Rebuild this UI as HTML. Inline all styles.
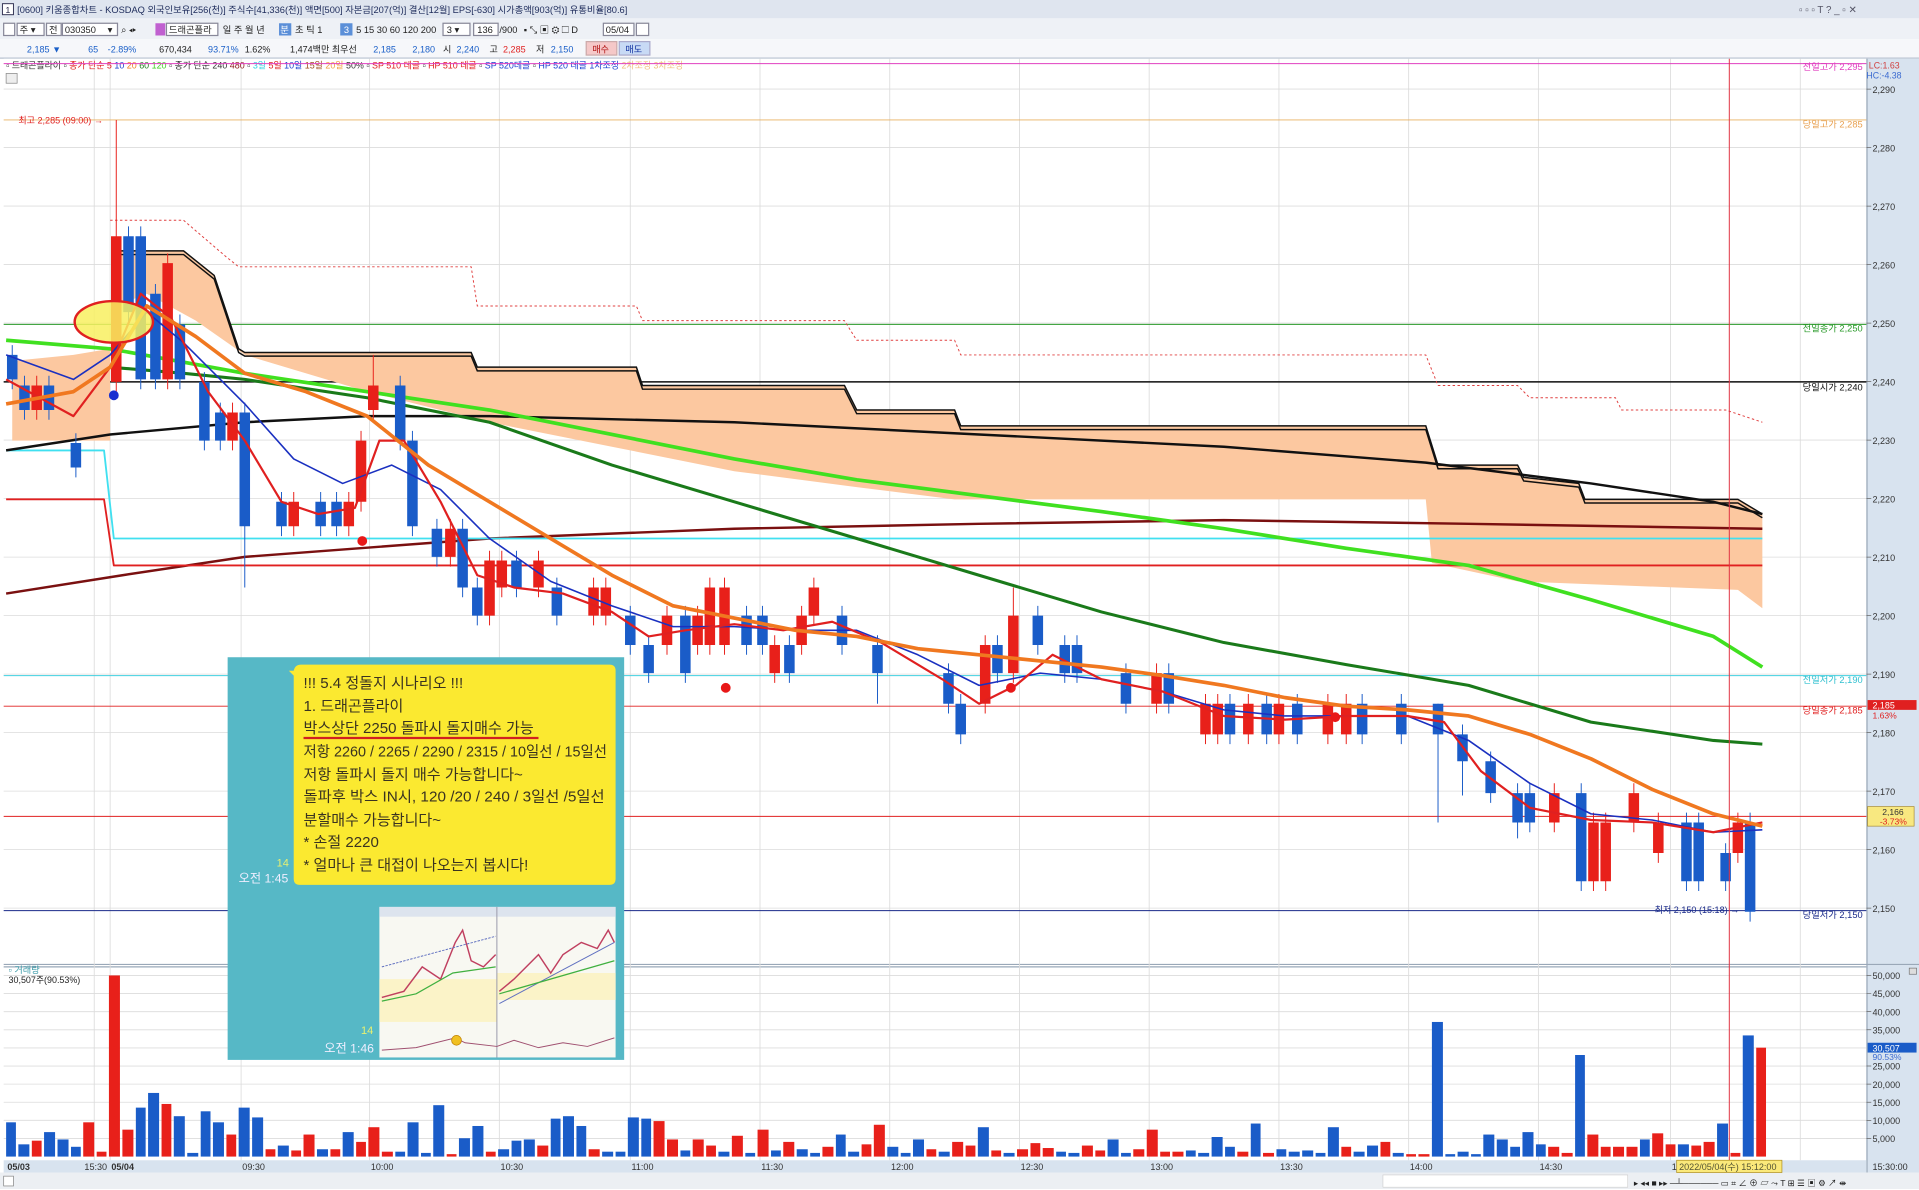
<!DOCTYPE html>
<html><head><meta charset="utf-8"><style>
html,body{margin:0;padding:0;background:#fff;overflow:hidden;width:1919px;height:1189px}
#w{position:absolute;left:0;top:0;width:1568px;height:971.5px;transform:scale(1.22385,1.2239);transform-origin:0 0}
svg{position:absolute;left:0;top:0;display:block}
text{font-family:"Liberation Sans","Noto Sans CJK KR",sans-serif}
#vol{position:absolute;left:4.7px;top:797px;height:148px;width:1480px;display:flex;align-items:flex-end;gap:2px}
#vol i{display:block;width:8.6px;flex:none}
#vol i.b{background:#1a5cc8}#vol i.r{background:#e8201a}
</style></head><body><div id="w">
<svg width="1568" height="972" xmlns="http://www.w3.org/2000/svg">
<rect x="0" y="0" width="1568" height="15" fill="#dfe5ef"/>
<rect x="2" y="3" width="9" height="9" fill="#fff" stroke="#335" stroke-width="0.8"/>
<text x="4.5" y="10.5" font-size="7" fill="#224">1</text>
<text x="14" y="10.5" font-size="7.6" fill="#1c2a5a">[0600] 키움종합차트 - KOSDAQ 외국인보유[256(천)] 주식수[41,336(천)] 액면[500] 자본금[207(억)] 결산[12월] EPS[-630] 시가총액[903(억)] 유통비율[80.6]</text>
<text x="1470" y="10.5" font-size="8" fill="#556">▫ ▫ ▫ T ? _ ▫ ✕</text>
<rect x="0" y="15" width="1568" height="17" fill="#eef1f6"/>
<rect x="0" y="32" width="1568" height="15" fill="#f6f7fa"/>
<line x1="0" y1="47.5" x2="1568" y2="47.5" stroke="#b8c2d0"/>
<g font-size="7.6" fill="#222">
<rect x="3" y="19" width="9" height="10" fill="#fff" stroke="#889"/><rect x="14" y="19" width="22" height="10" fill="#fff" stroke="#889"/><text x="16" y="27">주 ▾</text>
<rect x="38" y="19" width="12" height="10" fill="#fff" stroke="#889"/><text x="40" y="27">전</text>
<rect x="51" y="19" width="45" height="10" fill="#fff" stroke="#889"/><text x="53" y="27">030350</text><text x="88" y="27">▾</text>
<text x="99" y="27">⌕ ◂▸</text>
<rect x="127" y="19" width="8" height="10" fill="#c060d0"/>
<rect x="136" y="19" width="42" height="10" fill="#fff" stroke="#889"/><text x="138" y="27">드래곤플라</text>
<text x="182" y="27">일 주 월 년</text>
<rect x="228" y="19" width="10" height="10" fill="#5b8fd8"/><text x="229" y="27" fill="#fff">분</text>
<text x="241" y="27">초 틱 1</text>
<rect x="278" y="19" width="10" height="10" fill="#5b8fd8"/><text x="281" y="27" fill="#fff">3</text>
<text x="291" y="27">5 15 30 60 120 200</text>
<rect x="362" y="19" width="22" height="10" fill="#fff" stroke="#889"/><text x="365" y="27">3 ▾</text>
<rect x="387" y="19" width="20" height="10" fill="#fff" stroke="#889"/><text x="390" y="27">136</text><text x="408" y="27">/900</text>
<text x="428" y="27">▪ ⤡ ▣ ⚙ ☐ D</text>
<rect x="493" y="19" width="25" height="10" fill="#fff" stroke="#889"/><text x="495" y="27">05/04</text>
<rect x="520" y="19" width="10" height="10" fill="#fff" stroke="#889"/>
<g font-size="7.4">
<text x="22" y="43" fill="#1a5fc8">2,185 ▼</text><text x="72" y="43" fill="#1a5fc8">65</text><text x="88" y="43" fill="#1a5fc8">-2.89%</text>
<text x="130" y="43">670,434</text><text x="170" y="43" fill="#1a5fc8">93.71%</text><text x="200" y="43">1.62%</text>
<text x="237" y="43">1,474백만 최우선</text><text x="305" y="43" fill="#1a5fc8">2,185</text><text x="337" y="43" fill="#1a5fc8">2,180</text>
<text x="362" y="43">시</text><text x="373" y="43" fill="#1a5fc8">2,240</text><text x="400" y="43">고</text><text x="411" y="43" fill="#e02020">2,285</text><text x="438" y="43">저</text><text x="450" y="43" fill="#1a5fc8">2,150</text>
<rect x="479" y="34" width="25" height="11" fill="#f5c8c8" stroke="#caa"/><text x="484" y="43" fill="#b01010">매수</text>
<rect x="506" y="34" width="25" height="11" fill="#c8daf5" stroke="#aac"/><text x="511" y="43" fill="#1030a0">매도</text>
</g></g>
<rect x="3" y="48" width="1522" height="740" fill="#fff"/>
<rect x="1525" y="48" width="43" height="910" fill="#d8e3ef"/>
<line x1="1525.5" y1="48" x2="1525.5" y2="958" stroke="#9aa8b8"/>
<line x1="3" y1="788" x2="1568" y2="788" stroke="#9aa8b8"/>
<line x1="3" y1="790" x2="1525" y2="790" stroke="#9aa8b8"/>
<rect x="5" y="60" width="9" height="8" fill="#eee" stroke="#888" stroke-width="0.6"/>
<path d="M3 72.8H1525M3 120.6H1525M3 168.4H1525M3 216.2H1525M3 264H1525M3 311.8H1525M3 359.6H1525M3 407.4H1525M3 455.2H1525M3 503H1525M3 550.8H1525M3 598.6H1525M3 646.4H1525M3 694.2H1525M3 742H1525M3 797H1525M3 811.8H1525M3 826.6H1525M3 841.4H1525M3 856.2H1525M3 871H1525M3 885.8H1525M3 900.6H1525M3 915.4H1525M3 930.2H1525M77 48V948M90 48V948M197 48V948M302 48V948M408 48V948M515 48V948M621 48V948M727 48V948M833 48V948M939 48V948M1045 48V948M1151 48V948M1257 48V948M1365 48V948M1471 48V948" stroke="#dcdcdc" stroke-width="0.7" fill="none"/>
<path d="M1525 72.8h4M1525 120.6h4M1525 168.4h4M1525 216.2h4M1525 264h4M1525 311.8h4M1525 359.6h4M1525 407.4h4M1525 455.2h4M1525 503h4M1525 550.8h4M1525 598.6h4M1525 646.4h4M1525 694.2h4M1525 742h4M1525 797h4M1525 811.8h4M1525 826.6h4M1525 841.4h4M1525 871h4M1525 885.8h4M1525 900.6h4M1525 915.4h4M1525 930.2h4" stroke="#666" stroke-width="0.6"/>
<g font-size="7.4" fill="#333">
<text x="1530" y="75.8">2,290</text><text x="1530" y="123.6">2,280</text><text x="1530" y="171.4">2,270</text><text x="1530" y="219.2">2,260</text><text x="1530" y="267">2,250</text><text x="1530" y="314.8">2,240</text><text x="1530" y="362.6">2,230</text><text x="1530" y="410.4">2,220</text><text x="1530" y="458.2">2,210</text><text x="1530" y="506">2,200</text><text x="1530" y="553.8">2,190</text><text x="1530" y="601.6">2,180</text><text x="1530" y="649.4">2,170</text><text x="1530" y="697.2">2,160</text><text x="1530" y="745">2,150</text>
<text x="1530" y="800">50,000</text><text x="1530" y="814.8">45,000</text><text x="1530" y="829.6">40,000</text><text x="1530" y="844.4">35,000</text><text x="1530" y="874">25,000</text><text x="1530" y="888.8">20,000</text><text x="1530" y="903.6">15,000</text><text x="1530" y="918.4">10,000</text><text x="1530" y="933.2">5,000</text>
</g>
<text x="5" y="56" font-size="7.3" fill="#333">▫ 드래곤플라이 ▫ <tspan fill="#e02020">종가 단순 5</tspan> <tspan fill="#1a40d0">10</tspan> <tspan fill="#f08020">20</tspan> <tspan fill="#208020">60</tspan> <tspan fill="#40d020">120</tspan> ▫ 종가 단순 240 <tspan fill="#8a1a1a">480</tspan> ▫ <tspan fill="#30d0e0">3일</tspan> <tspan fill="#e02020">5일</tspan> <tspan fill="#1a40d0">10일</tspan> <tspan fill="#a05020">15일</tspan> <tspan fill="#f0a040">20일</tspan> 50% ▫ <tspan fill="#e02020">SP 510 데골</tspan> ▫ <tspan fill="#e02020">HP 510 데골</tspan> ▫ <tspan fill="#1a40d0">SP 520데골</tspan> ▫ <tspan fill="#1a40d0">HP 520 데골</tspan> <tspan fill="#1a40d0">1차조정</tspan> <tspan fill="#f0c080">2차조정 3차조정</tspan></text>
<line x1="3" x2="1525" y1="52" y2="52" stroke="#e040c0" stroke-width="0.8"/>
<line x1="3" x2="1525" y1="98" y2="98" stroke="#e8b060" stroke-width="0.8"/>
<line x1="3" x2="1525" y1="265" y2="265" stroke="#2a9a2a" stroke-width="0.8"/>
<line x1="3" x2="1525" y1="312" y2="312" stroke="#111" stroke-width="1.2"/>
<line x1="3" x2="1525" y1="552" y2="552" stroke="#40d0e0" stroke-width="0.8"/>
<line x1="3" x2="1525" y1="577" y2="577" stroke="#e02020" stroke-width="0.8"/>
<line x1="3" x2="1525" y1="667" y2="667" stroke="#e02020" stroke-width="0.8"/>
<line x1="3" x2="1525" y1="744" y2="744" stroke="#1a2a8a" stroke-width="0.8"/>
<g font-size="7.6" text-anchor="end">
<text x="1522" y="57" fill="#e040c0">전일고가 2,295</text>
<text x="1522" y="104" fill="#e8a050">당일고가 2,285</text>
<text x="1522" y="271" fill="#2a9a2a">전일종가 2,250</text>
<text x="1522" y="319" fill="#111">당일시가 2,240</text>
<text x="1522" y="558" fill="#30c0d0">전일저가 2,190</text>
<text x="1522" y="583" fill="#e02020">당일종가 2,185</text>
<text x="1522" y="750" fill="#1a2a8a">당일저가 2,150</text>
</g>
<text x="1527" y="56" font-size="7.2" fill="#d04040">LC:1.63</text>
<text x="1525" y="64" font-size="7.2" fill="#3a6ad0">HC:-4.38</text>
<path d="M10 295 L60 290 L90 285 L90 360 L10 360Z" fill="#fcc8a0"/>
<path d="M95 205 L150 205 L175 225 L195 285 L200 288 L385 288 L390 300 L520 300 L525 315 L690 315 L700 335 L780 335 L785 348 L1165 348 L1175 380 L1240 380 L1245 390 L1290 395 L1295 408 L1420 408 L1440 420 L1440 497 L1420 482 L1240 475 L1170 460 L1165 408 L780 408 L700 398 L600 385 L500 365 L400 345 L300 320 L200 290 L160 262 L120 240 L95 250Z" fill="#fcc8a0"/>
<path d="M95 205 L150 205 L175 225 L195 285 L200 288 L385 288 L390 300 L520 300 L525 315 L690 315 L700 335 L780 335 L785 348 L1165 348 L1175 380 L1240 380 L1245 390 L1290 395 L1295 408 L1420 408 L1440 420" fill="none" stroke="#111" stroke-width="1.2"/>
<path d="M95 208 L150 208 L175 228 L195 288 L200 291 L385 291 L390 303 L520 303 L525 318 L690 318 L700 338 L780 338 L785 351 L1165 351 L1175 383 L1240 383 L1245 393 L1290 398 L1295 411 L1420 411 L1440 423" fill="none" stroke="#111" stroke-width="1.2"/>
<path d="M90 180 L150 180 L185 210 L195 218 L385 218 L390 250 L520 250 L525 262 L690 262 L700 278 L780 278 L785 290 L1165 290 L1175 315 L1240 315 L1250 325 L1320 325 L1325 335 L1410 335 L1440 345" fill="none" stroke="#e04040" stroke-width="0.8" stroke-dasharray="2 2"/>
<g fill="none" stroke-linejoin="round">
<path d="M5 485 L100 470 L200 455 L400 440 L600 432 L800 428 L1000 425 L1200 428 L1440 432" stroke="#7a1010" stroke-width="2"/>
<path d="M5 368 L85 368 L93 440 L1440 440" stroke="#40e0f0" stroke-width="1.5"/>
<path d="M5 408 L85 408 L93 462 L1440 462" stroke="#e02020" stroke-width="1.5"/>
<path d="M5 368 L90 355 L200 345 L300 340 L400 340 L600 345 L800 355 L1000 365 L1165 378 L1300 395 L1400 410 L1440 420" stroke="#111" stroke-width="2"/>
<path d="M5 278 L90 285 L200 305 L300 320 L400 335 L500 355 L600 375 L700 392 L800 405 L900 418 L1000 432 L1100 448 L1200 462 L1300 490 L1400 520 L1440 545" stroke="#40e020" stroke-width="3"/>
<path d="M90 300 L150 305 L200 310 L300 325 L400 345 L500 380 L600 410 L700 440 L800 470 L900 500 L1000 525 L1100 543 L1200 560 L1300 590 L1400 605 L1440 608" stroke="#1a7a1a" stroke-width="2.5"/>
</g>
<path stroke="#1a5cc8" stroke-width="0.8" d="M10 282V318M20 307V343M40 307V343M62 354V390M105 185V263M115 185V318M127 232V318M147 257V318M167 304V368M180 329V368M200 329V480M230 402V438M262 402V438M275 402V438M327 307V368M337 352V438M357 424V463M378 424V488M390 472V511M422 450V488M455 472V511M515 495V535M530 519V558M560 495V558M610 495V535M623 495V535M645 519V558M688 495V535M717 519V575M775 542V583M785 567V608M815 519V558M848 495V535M870 519V558M880 519V558M920 542V583M955 542V583M1005 567V608M1035 567V608M1060 567V608M1113 567V608M1145 567V608M1175 575V672M1195 592V650M1218 614V656M1240 640V685M1250 640V680M1292 640V728M1378 664V728M1388 664V728M1410 689V728M1430 664V753"/>
<path stroke="#e8201a" stroke-width="0.8" d="M30 307V343M95 98V320M137 207V318M190 329V368M240 402V438M285 402V438M295 352V418M305 290V345M368 424V463M400 450V511M410 450V488M440 450V488M485 472V511M495 472V511M545 495V535M570 495V535M580 472V535M592 472V535M633 519V558M655 495V535M665 472V511M805 519V583M828 480V558M945 542V583M985 567V608M995 567V608M1020 567V608M1045 567V608M1085 567V608M1100 567V608M1270 640V680M1302 664V728M1312 664V728M1335 640V680M1355 664V705M1420 664V705"/>
<path fill="#1a5cc8" d="M5.7 290h8.6v20h-8.6zM15.7 315h8.6v20h-8.6zM35.7 315h8.6v20h-8.6zM57.7 362h8.6v20h-8.6zM100.7 193h8.6v62h-8.6zM110.7 193h8.6v117h-8.6zM122.7 240h8.6v70h-8.6zM142.7 265h8.6v45h-8.6zM162.7 312h8.6v48h-8.6zM175.7 337h8.6v23h-8.6zM195.7 337h8.6v93h-8.6zM225.7 410h8.6v20h-8.6zM257.7 410h8.6v20h-8.6zM270.7 410h8.6v20h-8.6zM322.7 315h8.6v45h-8.6zM332.7 360h8.6v70h-8.6zM352.7 432h8.6v23h-8.6zM373.7 432h8.6v48h-8.6zM385.7 480h8.6v23h-8.6zM417.7 458h8.6v22h-8.6zM450.7 480h8.6v23h-8.6zM510.7 503h8.6v24h-8.6zM525.7 527h8.6v23h-8.6zM555.7 503h8.6v47h-8.6zM605.7 503h8.6v24h-8.6zM618.7 503h8.6v24h-8.6zM640.7 527h8.6v23h-8.6zM683.7 503h8.6v24h-8.6zM712.7 527h8.6v23h-8.6zM770.7 550h8.6v25h-8.6zM780.7 575h8.6v25h-8.6zM810.7 527h8.6v23h-8.6zM843.7 503h8.6v24h-8.6zM865.7 527h8.6v23h-8.6zM875.7 527h8.6v23h-8.6zM915.7 550h8.6v25h-8.6zM950.7 550h8.6v25h-8.6zM1000.7 575h8.6v25h-8.6zM1030.7 575h8.6v25h-8.6zM1055.7 575h8.6v25h-8.6zM1108.7 575h8.6v25h-8.6zM1140.7 575h8.6v25h-8.6zM1170.7 575h8.6v25h-8.6zM1190.7 600h8.6v22h-8.6zM1213.7 622h8.6v26h-8.6zM1235.7 648h8.6v24h-8.6zM1245.7 648h8.6v24h-8.6zM1287.7 648h8.6v72h-8.6zM1373.7 672h8.6v48h-8.6zM1383.7 672h8.6v48h-8.6zM1405.7 697h8.6v23h-8.6zM1425.7 672h8.6v73h-8.6z"/>
<path fill="#e8201a" d="M25.7 315h8.6v20h-8.6zM90.7 193h8.6v119h-8.6zM132.7 215h8.6v95h-8.6zM185.7 337h8.6v23h-8.6zM235.7 410h8.6v20h-8.6zM280.7 410h8.6v20h-8.6zM290.7 360h8.6v50h-8.6zM300.7 315h8.6v20h-8.6zM363.7 432h8.6v23h-8.6zM395.7 458h8.6v45h-8.6zM405.7 458h8.6v22h-8.6zM435.7 458h8.6v22h-8.6zM480.7 480h8.6v23h-8.6zM490.7 480h8.6v23h-8.6zM540.7 503h8.6v24h-8.6zM565.7 503h8.6v24h-8.6zM575.7 480h8.6v47h-8.6zM587.7 480h8.6v47h-8.6zM628.7 527h8.6v23h-8.6zM650.7 503h8.6v24h-8.6zM660.7 480h8.6v23h-8.6zM800.7 527h8.6v48h-8.6zM823.7 503h8.6v47h-8.6zM940.7 550h8.6v25h-8.6zM980.7 575h8.6v25h-8.6zM990.7 575h8.6v25h-8.6zM1015.7 575h8.6v25h-8.6zM1040.7 575h8.6v25h-8.6zM1080.7 575h8.6v25h-8.6zM1095.7 575h8.6v25h-8.6zM1265.7 648h8.6v24h-8.6zM1297.7 672h8.6v48h-8.6zM1307.7 672h8.6v48h-8.6zM1330.7 648h8.6v24h-8.6zM1350.7 672h8.6v25h-8.6zM1415.7 672h8.6v25h-8.6z"/>
<g fill="none" stroke-linejoin="round">
<path d="M5 290 L60 310 L90 290 L120 255 L150 280 L200 330 L240 375 L280 395 L320 380 L360 400 L400 440 L450 475 L500 495 L550 512 L600 512 L650 515 L700 515 L750 535 L800 560 L850 550 L900 555 L950 565 L1000 580 L1050 585 L1100 585 L1150 585 L1200 605 L1250 640 L1300 665 L1350 670 L1400 680 L1440 678" stroke="#1a30c0" stroke-width="1.3"/>
<path d="M5 310 L60 340 L90 300 L115 240 L140 260 L170 320 L200 360 L230 410 L260 420 L290 415 L310 360 L330 360 L360 410 L390 470 L420 480 L460 485 L500 500 L530 520 L560 515 L600 510 L640 515 L680 508 L720 525 L770 555 L800 575 L830 560 L860 535 L900 555 L950 565 L1000 585 L1050 588 L1100 585 L1150 585 L1180 590 L1210 630 L1250 660 L1300 670 L1350 672 L1400 680 L1440 672" stroke="#e02020" stroke-width="1.8"/>
<path d="M5 330 L60 320 L90 300 L120 250 L160 275 L200 305 L250 320 L300 340 L350 380 L400 410 L450 440 L500 470 L550 495 L600 505 L650 515 L700 520 L750 530 L800 535 L850 540 L900 545 L950 552 L1000 560 L1050 570 L1100 577 L1150 580 L1200 585 L1250 600 L1300 620 L1350 645 L1400 665 L1440 675" stroke="#f07820" stroke-width="3"/>
</g>
<ellipse cx="93" cy="263" rx="32" ry="17" fill="#f8f060" fill-opacity="0.85" stroke="#e02020" stroke-width="2"/>
<circle cx="93" cy="323" r="4" fill="#1a30d0"/>
<circle cx="296" cy="442" r="4" fill="#e81818"/><circle cx="593" cy="562" r="4" fill="#e81818"/><circle cx="826" cy="562" r="4" fill="#e81818"/><circle cx="1091" cy="586" r="4" fill="#e81818"/>
<text x="15" y="101" font-size="7.4" fill="#e02020">최고 2,285 (09:00) →</text>
<text x="1352" y="746" font-size="7.4" fill="#1a2a8a">최저 2,150 (15:18) →</text>
<rect x="1526" y="572" width="40" height="8" fill="#e02020"/><text x="1530" y="579" font-size="7.3" fill="#fff">2,185</text>
<text x="1530" y="587" font-size="7" fill="#e02020">1.63%</text>
<rect x="1526" y="659" width="38" height="16" fill="#f8e880" stroke="#a08020" stroke-width="0.5"/>
<text x="1538" y="666" font-size="7" fill="#333">2,166</text><text x="1536" y="673.5" font-size="7" fill="#e02020">-3.73%</text>
<line x1="1413" x2="1413" y1="48" y2="948" stroke="#e03040" stroke-width="0.8"/>
<rect x="1526" y="852" width="40" height="8" fill="#1a5cc8"/><text x="1530" y="859" font-size="7.3" fill="#fff">30,507</text>
<text x="1530" y="866" font-size="7" fill="#3a6ad0">90.53%</text>
<rect x="1560" y="791" width="6" height="5" fill="#ddd" stroke="#666" stroke-width="0.5"/>
<text x="7" y="795" font-size="7.5" fill="#3a9aa8">▫ 거래량</text>
<text x="7" y="803" font-size="7.3" fill="#222">30,507주(90.53%)</text>
<rect x="3" y="948" width="1522" height="10" fill="#d8e3ef"/>
<rect x="0" y="958" width="1568" height="13.5" fill="#eceff3"/>
<rect x="3" y="961" width="8" height="8" fill="#fff" stroke="#888" stroke-width="0.6"/>
<g font-size="7.4" fill="#333">
<text x="6" y="956" font-weight="bold">05/03</text><text x="69" y="956">15:30</text><text x="91" y="956" font-weight="bold">05/04</text><text x="198" y="956">09:30</text><text x="303" y="956">10:00</text><text x="409" y="956">10:30</text><text x="516" y="956">11:00</text><text x="622" y="956">11:30</text><text x="728" y="956">12:00</text><text x="834" y="956">12:30</text><text x="940" y="956">13:00</text><text x="1046" y="956">13:30</text><text x="1152" y="956">14:00</text><text x="1258" y="956">14:30</text><text x="1366" y="956">15</text>
</g>
<rect x="1370" y="948" width="86" height="10" fill="#fbe97a" stroke="#b09020" stroke-width="0.6"/>
<text x="1372" y="956" font-size="7.4" fill="#553">2022/05/04(수) 15:12:00</text>
<text x="1530" y="956" font-size="7.4" fill="#333">15:30:00</text>
<rect x="1130" y="960" width="200" height="10" fill="#fff" stroke="#ccc" stroke-width="0.5"/>
<text x="1335" y="969" font-size="7" fill="#222">▸ ◂◂ ■ ▸▸ ─┴──────  ▭ ⌗ ∠ ⊕ ▱ ⤳ T ⊞ ☰ ▣ ⚙ ↗ ⇼</text>
<rect x="186" y="537" width="324" height="329" fill="#56b8c6"/>
<path d="M246 543 H498 Q503 543 503 548 V718 Q503 723 498 723 H245 Q240 723 240 718 V552 L236 548 L240 548 Q241 543 246 543Z" fill="#fbe930"/>
<g font-size="12.3" fill="#3a3320">
<text x="248" y="562">!!! 5.4 정돌지 시나리오 !!!</text>
<text x="248" y="581">1. 드래곤플라이</text>
<text x="248" y="599">박스상단 2250 돌파시 돌지매수 가능</text>
<text x="248" y="618" textLength="248" lengthAdjust="spacingAndGlyphs">저항 2260 / 2265 / 2290 / 2315 / 10일선 / 15일선</text>
<text x="248" y="637">저항 돌파시 돌지 매수 가능합니다~</text>
<text x="248" y="655" textLength="246" lengthAdjust="spacingAndGlyphs">돌파후 박스 IN시, 120 /20 / 240 / 3일선 /5일선</text>
<text x="248" y="674">분할매수 가능합니다~</text>
<text x="248" y="692">* 손절 2220</text>
<text x="248" y="711">* 얼마나 큰 대접이 나오는지 봅시다!</text>
</g>
<line x1="248" y1="603" x2="440" y2="603" stroke="#d02020" stroke-width="1.8"/>
<text x="226" y="708" font-size="9" fill="#e8f070">14</text>
<text x="195" y="721" font-size="10" fill="#eef">오전 1:45</text>
<text x="295" y="845" font-size="9" fill="#e8f070">14</text>
<text x="265" y="860" font-size="10" fill="#eef">오전 1:46</text>
<rect x="310" y="741" width="193" height="123" fill="#f8f8f2"/>
<rect x="310" y="741" width="193" height="8" fill="#dde4ee"/>
<rect x="310" y="800" width="96" height="35" fill="#fbf3c8"/>
<rect x="406" y="795" width="97" height="22" fill="#fbf3c8"/>
<line x1="406" y1="741" x2="406" y2="864" stroke="#99a" stroke-width="0.8"/>
<path d="M312 815 L330 810 L345 790 L360 800 L372 770 L378 760 L385 785 L395 790 L405 780" fill="none" stroke="#c04060" stroke-width="1.2"/>
<path d="M312 818 L340 812 L370 795 L405 790" fill="none" stroke="#40b040" stroke-width="1"/>
<path d="M312 790 L405 765" fill="none" stroke="#6070c0" stroke-width="0.8" stroke-dasharray="2 1"/>
<path d="M408 810 L420 800 L430 790 L440 780 L450 795 L460 780 L475 770 L488 775 L497 760 L502 770" fill="none" stroke="#c04060" stroke-width="1.2"/>
<path d="M408 820 L502 770" fill="none" stroke="#6070c0" stroke-width="0.8"/>
<path d="M408 812 L502 785" fill="none" stroke="#40b040" stroke-width="1"/>
<path d="M312 858 L340 856 L372 848 L380 852 L406 855 L420 850 L440 856 L460 852 L480 855 L502 848" fill="none" stroke="#a05070" stroke-width="0.8"/>
<circle cx="373" cy="850" r="4" fill="#f0c020" stroke="#c08000" stroke-width="0.6"/>
</svg>
<div id="vol">
<i class="b" style="height:28px"></i><i class="b" style="height:10px"></i><i class="r" style="height:13px"></i><i class="b" style="height:20px"></i><i class="b" style="height:14px"></i><i class="b" style="height:8px"></i><i class="r" style="height:28px"></i><i class="r" style="height:4px"></i><i class="r" style="height:148px"></i><i class="r" style="height:22px"></i>
<i class="b" style="height:40px"></i><i class="b" style="height:52px"></i><i class="r" style="height:43px"></i><i class="b" style="height:33px"></i><i class="b" style="height:3px"></i><i class="b" style="height:37px"></i><i class="b" style="height:28px"></i><i class="r" style="height:18px"></i><i class="b" style="height:40px"></i><i class="b" style="height:32px"></i>
<i class="r" style="height:6px"></i><i class="b" style="height:9px"></i><i class="r" style="height:5px"></i><i class="r" style="height:18px"></i><i class="b" style="height:6px"></i><i class="r" style="height:6px"></i><i class="b" style="height:20px"></i><i class="r" style="height:12px"></i><i class="r" style="height:24px"></i><i class="r" style="height:4px"></i>
<i class="b" style="height:4px"></i><i class="b" style="height:28px"></i><i class="b" style="height:3px"></i><i class="b" style="height:42px"></i><i class="r" style="height:2px"></i><i class="b" style="height:15px"></i><i class="b" style="height:25px"></i><i class="r" style="height:4px"></i><i class="b" style="height:6px"></i><i class="b" style="height:13px"></i>
<i class="b" style="height:14px"></i><i class="r" style="height:9px"></i><i class="b" style="height:31px"></i><i class="b" style="height:33px"></i><i class="b" style="height:25px"></i><i class="r" style="height:6px"></i><i class="b" style="height:4px"></i><i class="b" style="height:4px"></i><i class="b" style="height:32px"></i><i class="b" style="height:31px"></i>
<i class="r" style="height:29px"></i><i class="r" style="height:14px"></i><i class="b" style="height:5px"></i><i class="r" style="height:14px"></i><i class="r" style="height:9px"></i><i class="b" style="height:4px"></i><i class="r" style="height:17px"></i><i class="b" style="height:3px"></i><i class="r" style="height:22px"></i><i class="b" style="height:5px"></i>
<i class="r" style="height:12px"></i><i class="b" style="height:6px"></i><i class="b" style="height:3px"></i><i class="r" style="height:8px"></i><i class="b" style="height:18px"></i><i class="b" style="height:4px"></i><i class="r" style="height:10px"></i><i class="r" style="height:26px"></i><i class="b" style="height:8px"></i><i class="b" style="height:3px"></i>
<i class="b" style="height:14px"></i><i class="r" style="height:6px"></i><i class="b" style="height:4px"></i><i class="r" style="height:12px"></i><i class="r" style="height:9px"></i><i class="b" style="height:24px"></i><i class="r" style="height:5px"></i><i class="b" style="height:3px"></i><i class="r" style="height:6px"></i><i class="r" style="height:11px"></i>
<i class="r" style="height:7px"></i><i class="b" style="height:4px"></i><i class="b" style="height:3px"></i><i class="r" style="height:9px"></i><i class="r" style="height:5px"></i><i class="b" style="height:14px"></i><i class="b" style="height:3px"></i><i class="r" style="height:6px"></i><i class="r" style="height:22px"></i><i class="r" style="height:4px"></i>
<i class="r" style="height:4px"></i><i class="b" style="height:5px"></i><i class="b" style="height:3px"></i><i class="b" style="height:16px"></i><i class="b" style="height:8px"></i><i class="r" style="height:4px"></i><i class="b" style="height:27px"></i><i class="r" style="height:3px"></i><i class="b" style="height:6px"></i><i class="b" style="height:4px"></i>
<i class="b" style="height:5px"></i><i class="b" style="height:3px"></i><i class="b" style="height:24px"></i><i class="r" style="height:8px"></i><i class="b" style="height:4px"></i><i class="b" style="height:9px"></i><i class="r" style="height:12px"></i><i class="b" style="height:3px"></i><i class="r" style="height:2px"></i><i class="r" style="height:2px"></i>
<i class="b" style="height:110px"></i><i class="b" style="height:2px"></i><i class="b" style="height:4px"></i><i class="b" style="height:2px"></i><i class="b" style="height:18px"></i><i class="b" style="height:14px"></i><i class="b" style="height:8px"></i><i class="b" style="height:20px"></i><i class="b" style="height:10px"></i><i class="r" style="height:8px"></i>
<i class="r" style="height:3px"></i><i class="b" style="height:83px"></i><i class="r" style="height:18px"></i><i class="r" style="height:8px"></i><i class="r" style="height:8px"></i><i class="r" style="height:8px"></i><i class="b" style="height:14px"></i><i class="r" style="height:19px"></i><i class="r" style="height:10px"></i><i class="b" style="height:10px"></i>
<i class="r" style="height:9px"></i><i class="r" style="height:12px"></i><i class="b" style="height:27px"></i><i class="r" style="height:3px"></i><i class="b" style="height:99px"></i><i class="r" style="height:89px"></i>
</div>
</div></body></html>
